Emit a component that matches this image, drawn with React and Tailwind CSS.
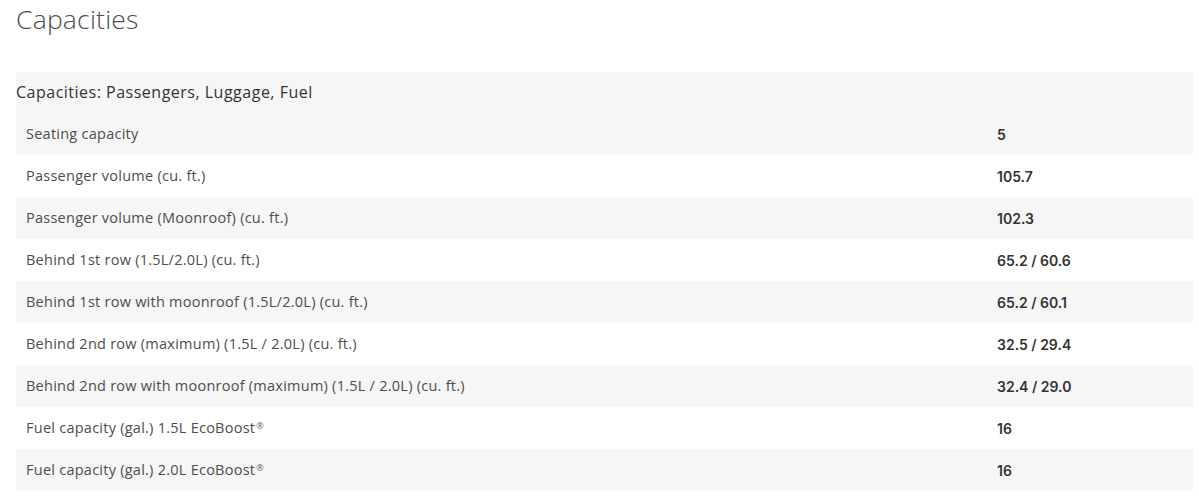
import React from "react";

const rows = [
  { label: "Seating capacity", value: "5" },
  { label: "Passenger volume (cu. ft.)", value: "105.7" },
  { label: "Passenger volume (Moonroof) (cu. ft.)", value: "102.3" },
  { label: "Behind 1st row (1.5L/2.0L) (cu. ft.)", value: "65.2 / 60.6" },
  { label: "Behind 1st row with moonroof (1.5L/2.0L) (cu. ft.)", value: "65.2 / 60.1" },
  { label: "Behind 2nd row (maximum) (1.5L / 2.0L) (cu. ft.)", value: "32.5 / 29.4" },
  { label: "Behind 2nd row with moonroof (maximum) (1.5L / 2.0L) (cu. ft.)", value: "32.4 / 29.0" },
  { label: "Fuel capacity (gal.) 1.5L EcoBoost", value: "16", reg: true },
  { label: "Fuel capacity (gal.) 2.0L EcoBoost", value: "16", reg: true },
];

const App = () => {
  return (
    <div className="w-[1199px] h-[499px] bg-white overflow-hidden px-4 font-['Open_Sans',sans-serif]">
      {/* title */}
      <h1 className="h-[72px] pt-[1px] text-[26.5px] font-light leading-[36px] text-[#4d4d4d] tracking-[0.2px]">
        Capacities
      </h1>

      {/* spec table */}
      <div className="w-[1177px]">
        <div className="h-[41px] bg-[#f6f6f6] flex items-center pb-[1px] text-[16px] font-medium text-[#333] tracking-[0.5px]">
          Capacities: Passengers, Luggage, Fuel
        </div>
        {rows.map((row, i) => (
          <div
            key={i}
            className={`h-[42px] flex items-center ${i % 2 === 0 ? "bg-[#f6f6f6]" : "bg-white"}`}
          >
            <div className="w-[981px] pl-[10px] text-[14.5px] text-[#4d4d4d] tracking-[0.25px]">
              {row.label}
              {row.reg && (
                <sup className="text-[9px] ml-[1px] text-[#666]">®</sup>
              )}
            </div>
            <div className="text-[14px] font-semibold text-[#333] font-['Inter',sans-serif]">
              {row.value}
            </div>
          </div>
        ))}
      </div>
    </div>
  );
};

export default App;
